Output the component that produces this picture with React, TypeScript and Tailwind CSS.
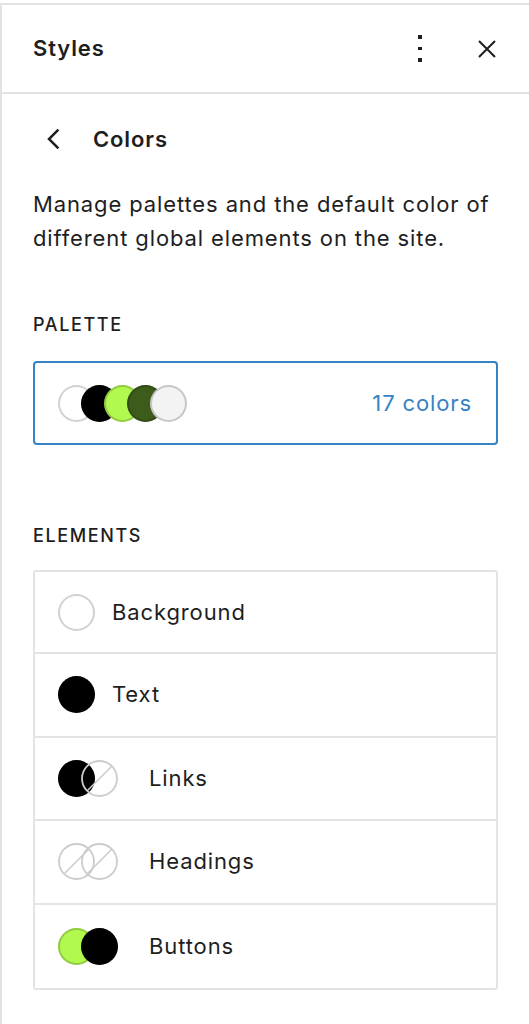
import React from 'react';

const FONT = { fontFamily: 'Inter, "Noto Sans", sans-serif' };

type Swatch = { color: string | null };

const Circle = ({ color, className = '' }: { color: string | null; className?: string }) => {
  if (color === null) {
    // transparent swatch: outline with a diagonal slash
    return (
      <span className={`relative block h-[37px] w-[37px] shrink-0 rounded-full ${className}`}>
        <svg viewBox="0 0 37 37" className="absolute inset-0 h-full w-full">
          <circle cx="18.5" cy="18.5" r="17.5" fill="none" stroke="#cccccc" strokeWidth="1.8" />
          <line x1="6.5" y1="30.5" x2="30.5" y2="6.5" stroke="#cccccc" strokeWidth="1.6" />
        </svg>
      </span>
    );
  }
  return (
    <span
      className={`block h-[37px] w-[37px] shrink-0 rounded-full shadow-[inset_0_0_0_2px_rgba(0,0,0,0.18)] ${className}`}
      style={{ backgroundColor: color }}
    />
  );
};

const palette = ['#ffffff', '#000000', '#b1f84f', '#3d5b1a', '#f3f3f3'];

const elements: { label: string; swatches: Swatch[] }[] = [
  { label: 'Background', swatches: [{ color: '#ffffff' }] },
  { label: 'Text', swatches: [{ color: '#000000' }] },
  { label: 'Links', swatches: [{ color: '#000000' }, { color: null }] },
  { label: 'Headings', swatches: [{ color: null }, { color: null }] },
  { label: 'Buttons', swatches: [{ color: '#b1f84f' }, { color: '#000000' }] },
];

export default function App() {
  return (
    <div className="min-h-screen bg-white text-[#1e1e1e]" style={FONT}>
      <div className="mt-[3px] min-h-[1021px] border-l-2 border-t-2 border-[#e2e2e2]">
        {/* Header */}
        <div className="flex h-[89px] items-center border-b-2 border-[#e2e2e2] pl-[31px] pr-[22px]">
          <h2 className="text-[22px] font-semibold tracking-[0.04em]">Styles</h2>
          <div className="ml-auto flex items-center">
            <button className="flex h-[40px] w-[40px] flex-col items-center justify-center gap-[8px]">
              <span className="block h-[3.5px] w-[3.5px] bg-[#1e1e1e]" />
              <span className="block h-[3.5px] w-[3.5px] bg-[#1e1e1e]" />
              <span className="block h-[3.5px] w-[3.5px] bg-[#1e1e1e]" />
            </button>
            <button className="ml-[27px] flex h-[40px] w-[40px] items-center justify-center">
              <svg viewBox="0 0 20 20" className="h-[20px] w-[20px]">
                <path d="M2 2 L18 18 M18 2 L2 18" stroke="#1e1e1e" strokeWidth="2" fill="none" />
              </svg>
            </button>
          </div>
        </div>

        <div className="px-[31px]">
          {/* Back + title */}
          <div className="mt-[25px] flex h-[40px] items-center">
            <svg viewBox="0 0 24 24" className="ml-[6px] h-[30px] w-[30px]">
              <path d="M15.5 4.5 L8 12 L15.5 19.5" stroke="#1e1e1e" strokeWidth="2" fill="none" />
            </svg>
            <h3 className="ml-[24px] text-[22px] font-semibold tracking-[0.04em]">Colors</h3>
          </div>

          <p className="mt-[28px] text-[22px] leading-[34px] tracking-[0.04em]">
            Manage palettes and the default color of different global elements on the site.
          </p>

          <div className="mt-[58px] text-[18px] font-medium uppercase leading-[24px] tracking-[0.09em]">
            Palette
          </div>

          <div className="mt-[24px] flex h-[84px] items-center rounded-[4px] border-2 border-[#3582c4] pl-[23px] pr-[24px]">
            <div className="flex">
              {palette.map((c, i) => (
                <Circle key={i} color={c} className={i > 0 ? '-ml-[14px]' : ''} />
              ))}
            </div>
            <span className="ml-auto text-[22px] tracking-[0.04em] text-[#3582c4]">17 colors</span>
          </div>

          <div className="mt-[79px] text-[18px] font-medium uppercase leading-[24px] tracking-[0.09em]">
            Elements
          </div>

          <div className="mt-[22px] divide-y-2 divide-[#e4e4e4] rounded-[3px] border-2 border-[#e4e4e4]">
            {elements.map((el) => (
              <div key={el.label} className="flex h-[83.5px] items-center pl-[23px] first:h-[82px]">
                <div className="flex">
                  {el.swatches.map((s, i) => (
                    <Circle key={i} color={s.color} className={i > 0 ? '-ml-[14px]' : ''} />
                  ))}
                </div>
                <span
                  className={`text-[22px] tracking-[0.04em] ${el.swatches.length > 1 ? 'ml-[31px]' : 'ml-[17px]'}`}
                >
                  {el.label}
                </span>
              </div>
            ))}
          </div>
        </div>
      </div>
    </div>
  );
}
